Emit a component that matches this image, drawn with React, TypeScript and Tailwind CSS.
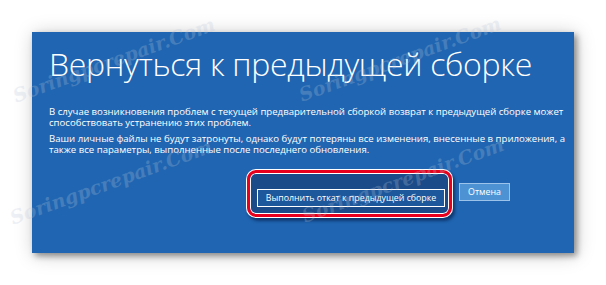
import React from "react";

const marks = [
  "left-[114px] top-[60px]",
  "left-[400px] top-[59px]",
  "left-[111px] top-[182px]",
  "left-[403px] top-[180px]",
];

export default function App() {
  return (
    <div className="relative w-[606px] h-[285px] bg-white overflow-hidden pt-[32px] pl-[32px]" style={{ fontFamily: '"Open Sans", "Noto Sans", sans-serif' }}>
      <div className="relative w-[542px] h-[221px] bg-[#1f65b1] pl-[17px] shadow-[3px_3px_6px_rgba(0,0,0,0.38),2px_2px_18px_rgba(0,0,0,0.22)]">
        <h1 className="pt-[12px] text-[32px] leading-[40px] font-light text-white tracking-[-0.3px]">
          Вернуться к предыдущей сборке
        </h1>
        <div className="mt-[22px] text-[9.6px] leading-[11px] text-white">
          <p>
            В случае возникновения проблем с текущей предварительной сборкой возврат к предыдущей сборке может
            <br />
            способствовать устранению этих проблем.
          </p>
          <p className="mt-[5px]">
            Ваши личные файлы не будут затронуты, однако будут потеряны все изменения, внесенные в приложения, а
            <br />
            также все параметры, выполненные после последнего обновления.
          </p>
        </div>
        <div className="mt-[28px] flex pl-[208px] gap-[14px]">
          <div className="relative">
            <div className="absolute left-[-10px] top-[-13px] right-[-7px] bottom-[-10px] rounded-[9px] border-[3px] border-[#e8001c] bg-[#1b4b88] shadow-[0_0_0_1px_#ffffff,inset_0_0_0_1px_#ffffff,2px_3px_3px_1px_rgba(0,20,60,0.55)]" />
            <button className="relative w-[188px] h-[18px] border border-white bg-[#1d579c] text-[8.8px] leading-[16px] text-white">
              Выполнить откат к предыдущей сборке
            </button>
          </div>
          <button className="w-[51px] h-[18px] border border-[#9cc4ea] bg-[#4d93d4] text-[8.8px] leading-[16px] text-white">
            Отмена
          </button>
        </div>
      </div>
      {marks.map((m, i) => (
        <span
          key={i}
          className={`pointer-events-none absolute ${m} -translate-x-1/2 -translate-y-1/2 rotate-[-20deg] whitespace-nowrap text-[19px] italic font-bold text-[#b9c6db] opacity-25`}
          style={{ fontFamily: '"DejaVu Serif", serif' }}
        >
          Soringpcrepair.Com
        </span>
      ))}
    </div>
  );
}
